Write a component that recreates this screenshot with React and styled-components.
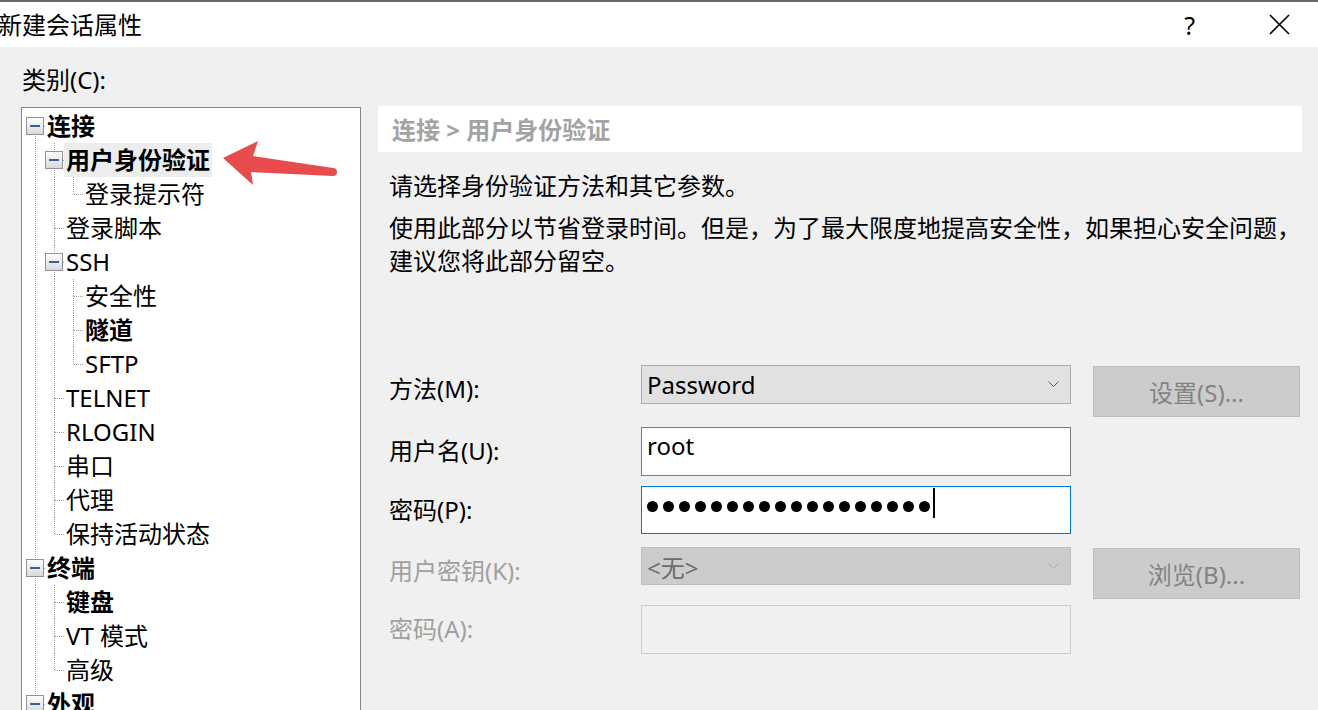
import React from 'react';
import styled, { createGlobalStyle } from 'styled-components';

const GlobalStyle = createGlobalStyle`
  html, body {
    margin: 0;
    padding: 0;
  }
  body {
    font-family: "Noto Sans", "Noto Sans CJK SC", sans-serif;
    background: #f0f0f0;
  }
`;

const Window = styled.div`
  position: relative;
  width: 1318px;
  height: 710px;
  overflow: hidden;
  background: #f0f0f0;
  color: #000;
  font-size: 24px;
`;

const TitleBar = styled.div`
  display: flex;
  align-items: center;
  justify-content: space-between;
  height: 45px;
  border-top: 2px solid #6b6b6b;
  background: #fff;
`;

const Title = styled.div`
  margin-left: -2px;
  line-height: 45px;
`;

const Caption = styled.div`
  display: flex;
  align-items: center;
  gap: 74px;
  padding-right: 28px;
`;

const HelpMark = styled.span`
  font-size: 25px;
  line-height: 30px;
`;

const Body = styled.div`
  display: flex;
  gap: 17px;
  padding: 0 16px 0 21px;
`;

const Sidebar = styled.div`
  width: 340px;
  flex-shrink: 0;
  display: flex;
  flex-direction: column;
`;

const CategoryLabel = styled.div`
  height: 60px;
  box-sizing: border-box;
  padding: 19px 0 0 1px;
  line-height: 28px;
`;

const TreeBox = styled.div`
  height: 640px;
  border: 1px solid #828790;
  background: #fff;
  padding: 1px 0 0 4px;
`;

const TreeRow = styled.div`
  display: flex;
  align-items: center;
  height: 34px;
`;

const NodeText = styled.span`
  padding: 0 2px;
  line-height: 34px;
  white-space: nowrap;
  font-weight: ${p => (p.$bold ? 700 : 400)};
  background: ${p => (p.$selected ? '#ededed' : 'transparent')};
`;

const Main = styled.div`
  width: 924px;
  min-width: 0;
  flex-shrink: 0;
  padding-top: 59px;
`;

const Crumb = styled.div`
  height: 46px;
  box-sizing: border-box;
  padding: 2px 0 0 14px;
  line-height: 44px;
  background: #fff;
  color: #a3a3a3;
  font-weight: 700;
`;

const Para = styled.p`
  margin: ${p => p.$top}px 0 0 11px;
  line-height: 33px;
  white-space: nowrap;
`;

const Form = styled.div`
  display: grid;
  grid-template-columns: 230px 430px 207px;
  grid-template-rows: 62px 59px 61px 58px 50px;
  column-gap: 22px;
  align-items: start;
  margin: 88px 0 0 11px;
`;

const FieldLabel = styled.div`
  padding-top: 9px;
  line-height: 30px;
  white-space: nowrap;
  color: ${p => (p.$disabled ? '#a0a0a0' : '#000')};
`;

const Select = styled.div`
  height: ${p => p.$h}px;
  box-sizing: border-box;
  display: flex;
  align-items: center;
  justify-content: space-between;
  padding: 0 11px 0 5px;
  background: ${p => (p.$disabled ? '#cccccc' : '#e1e1e1')};
  border: 1px solid ${p => (p.$disabled ? '#bfbfbf' : '#adadad')};
  color: ${p => (p.$disabled ? '#6d6d6d' : '#000')};
`;

const TextBox = styled.div`
  height: ${p => p.$h}px;
  box-sizing: border-box;
  padding: 3px 5px;
  line-height: 30px;
  background: ${p => (p.$disabled ? '#f0f0f0' : '#fff')};
  border: 1px solid ${p => (p.$disabled ? '#cccccc' : '#7a7a7a')};
`;

const PasswordBox = styled.div`
  height: 48px;
  box-sizing: border-box;
  display: flex;
  align-items: flex-start;
  padding: 1px 5px;
  background: #fff;
  border: 1px solid #0078d7;
`;

const Dots = styled.div`
  display: flex;
  gap: 5px;
  margin-top: 13px;
`;

const Dot = styled.span`
  width: 11px;
  height: 11px;
  border-radius: 50%;
  background: #000;
`;

const Caret = styled.span`
  width: 2px;
  height: 30px;
  margin-left: 3px;
  background: #000;
`;

const Button = styled.div`
  height: 51px;
  margin-top: 1px;
  box-sizing: border-box;
  display: flex;
  align-items: center;
  justify-content: center;
  background: #cccccc;
  border: 1px solid #bfbfbf;
  color: #838383;
`;

const Annotation = styled.svg`
  position: absolute;
  left: 218px;
  top: 136px;
`;

const tree = [
  {
    label: '连接',
    bold: true,
    children: [
      { label: '用户身份验证', bold: true, selected: true, children: [{ label: '登录提示符' }] },
      { label: '登录脚本' },
      { label: 'SSH', children: [{ label: '安全性' }, { label: '隧道', bold: true }, { label: 'SFTP' }] },
      { label: 'TELNET' },
      { label: 'RLOGIN' },
      { label: '串口' },
      { label: '代理' },
      { label: '保持活动状态' },
    ],
  },
  {
    label: '终端',
    bold: true,
    children: [{ label: '键盘', bold: true }, { label: 'VT 模式' }, { label: '高级' }],
  },
  { label: '外观', bold: true, children: [{ label: '窗口' }, { label: '突出' }] },
];

const flatten = (nodes, depth = 0, guides = [], out = []) => {
  nodes.forEach((node, i) => {
    const isLast = i === nodes.length - 1;
    out.push({
      ...node,
      depth,
      guides,
      isLast,
      isFirstRoot: depth === 0 && i === 0,
      hasChildren: !!node.children,
    });
    if (node.children) flatten(node.children, depth + 1, [...guides, !isLast], out);
  });
  return out;
};

const rows = flatten(tree);

const DOT = { stroke: '#a0a0a0', strokeWidth: 1, strokeDasharray: '1 1' };

// one 19px column of the tree lines
const Guide = ({ full }) => (
  <svg width="19" height="34">
    {full && <line x1="9.5" y1="0" x2="9.5" y2="34" {...DOT} />}
  </svg>
);

const Connector = ({ up, down, expander }) => (
  <svg width="19" height="34">
    <defs>
      <linearGradient id="exp" x1="0" y1="0" x2="0" y2="1">
        <stop offset="0" stopColor="#ffffff" />
        <stop offset="1" stopColor="#d8d8d8" />
      </linearGradient>
    </defs>
    {up && <line x1="9.5" y1="0" x2="9.5" y2="17" {...DOT} />}
    {down && <line x1="9.5" y1="17" x2="9.5" y2="34" {...DOT} />}
    <line x1="10" y1="17.5" x2="19" y2="17.5" {...DOT} />
    {expander && (
      <>
        <rect x="0.5" y="8.5" width="17" height="17" fill="url(#exp)" stroke="#929292" />
        <rect x="4" y="16" width="10" height="2" fill="#3f5ba9" />
      </>
    )}
  </svg>
);

const Chevron = ({ color }) => (
  <svg width="11" height="7" viewBox="0 0 11 7">
    <polyline points="0.5,0.5 5.5,5.5 10.5,0.5" fill="none" stroke={color} strokeWidth="1" />
  </svg>
);

const Close = () => (
  <svg width="21" height="21" viewBox="0 0 21 21">
    <path d="M1 1 L20 20 M20 1 L1 20" stroke="#000" strokeWidth="1.6" />
  </svg>
);

const App = () => (
  <Window>
    <GlobalStyle />
    <TitleBar>
      <Title>新建会话属性</Title>
      <Caption>
        <HelpMark>?</HelpMark>
        <Close />
      </Caption>
    </TitleBar>
    <Body>
      <Sidebar>
        <CategoryLabel>类别(C):</CategoryLabel>
        <TreeBox>
          {rows.map(row => (
            <TreeRow key={row.label}>
              {row.guides.map((g, i) => <Guide key={i} full={g} />)}
              <Connector up={!row.isFirstRoot} down={!row.isLast} expander={row.hasChildren} />
              <NodeText $bold={row.bold} $selected={row.selected}>{row.label}</NodeText>
            </TreeRow>
          ))}
        </TreeBox>
      </Sidebar>
      <Main>
        <Crumb>连接 &gt; 用户身份验证</Crumb>
        <Para $top={17}>请选择身份验证方法和其它参数。</Para>
        <Para $top={9}>
          使用此部分以节省登录时间。但是，为了最大限度地提高安全性，如果担心安全问题，
          <br />
          建议您将此部分留空。
        </Para>
        <Form>
          <FieldLabel>方法(M):</FieldLabel>
          <Select $h={39}>
            <span>Password</span>
            <Chevron color="#555" />
          </Select>
          <Button>设置(S)...</Button>

          <FieldLabel>用户名(U):</FieldLabel>
          <TextBox $h={49}>root</TextBox>
          <span />

          <FieldLabel>密码(P):</FieldLabel>
          <PasswordBox>
            <Dots>
              {Array.from({ length: 18 }, (_, i) => <Dot key={i} />)}
            </Dots>
            <Caret />
          </PasswordBox>
          <span />

          <FieldLabel $disabled>用户密钥(K):</FieldLabel>
          <Select $h={38} $disabled>
            <span>&lt;无&gt;</span>
            <Chevron color="#a8a8a8" />
          </Select>
          <Button>浏览(B)...</Button>

          <FieldLabel $disabled>密码(A):</FieldLabel>
          <TextBox $h={49} $disabled />
          <span />
        </Form>
      </Main>
    </Body>
    <Annotation width="126" height="54" viewBox="0 0 126 54">
      <path d="M5,22 L40,5 L35,20 L115,32 A4,4 0 0 1 115,40 L33,36 L35,49 Z" fill="#e84b4b" />
    </Annotation>
  </Window>
);

export default App;
